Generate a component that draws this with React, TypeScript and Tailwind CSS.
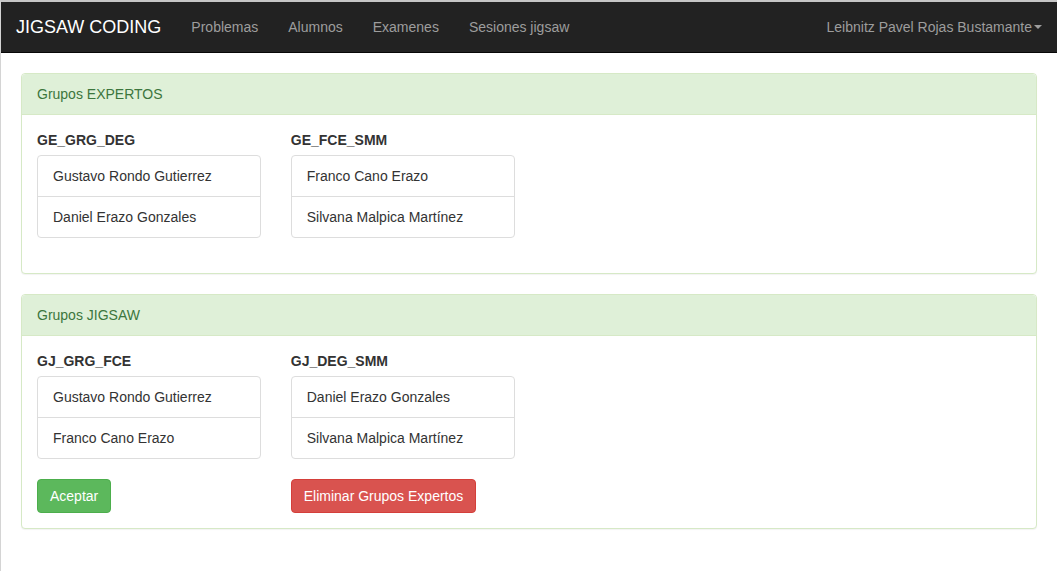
const navLinks = ['Problemas', 'Alumnos', 'Examenes', 'Sesiones jigsaw'];

const expertos = [
  { name: 'GE_GRG_DEG', members: ['Gustavo Rondo Gutierrez', 'Daniel Erazo Gonzales'] },
  { name: 'GE_FCE_SMM', members: ['Franco Cano Erazo', 'Silvana Malpica Martínez'] },
];

const jigsaw = [
  { name: 'GJ_GRG_FCE', members: ['Gustavo Rondo Gutierrez', 'Franco Cano Erazo'] },
  { name: 'GJ_DEG_SMM', members: ['Daniel Erazo Gonzales', 'Silvana Malpica Martínez'] },
];

type Grupo = { name: string; members: string[] };

function GroupList({ grupo }: { grupo: Grupo }) {
  return (
    <div className="w-[223.75px]">
      <div className="mb-[5px] text-[14px] font-bold leading-5 text-[#333]">{grupo.name}</div>
      <ul className="mb-5 rounded border border-[#ddd] bg-white">
        {grupo.members.map((m, i) => (
          <li
            key={m}
            className={`px-[15px] py-[10px] text-[14px] leading-5 text-[#333] ${i > 0 ? 'border-t border-[#ddd]' : ''}`}
          >
            {m}
          </li>
        ))}
      </ul>
    </div>
  );
}

function Panel({ title, grupos, footer }: { title: string; grupos: Grupo[]; footer?: boolean }) {
  return (
    <div className="mb-5 rounded border border-[#d6e9c6] bg-white shadow-[0_1px_1px_rgba(0,0,0,0.05)]">
      <div className="rounded-t border-b border-[#d6e9c6] bg-[#dff0d8] px-[15px] py-[10px] text-[14px] leading-5 text-[#3c763d]">
        {title}
      </div>
      <div className="p-[15px]">
        <div className="flex gap-[30px]">
          {grupos.map((g) => (
            <GroupList key={g.name} grupo={g} />
          ))}
        </div>
        {footer && (
          <div className="flex gap-[30px]">
            <div className="w-[223.75px]">
              <button className="rounded border border-[#4cae4c] bg-[#5cb85c] px-3 py-[6px] text-[14px] leading-5 text-white">
                Aceptar
              </button>
            </div>
            <div className="w-[223.75px]">
              <button className="whitespace-nowrap rounded border border-[#d43f3a] bg-[#d9534f] px-3 py-[6px] text-[14px] leading-5 text-white">
                Eliminar Grupos Expertos
              </button>
            </div>
          </div>
        )}
      </div>
    </div>
  );
}

export default function App() {
  return (
    <div className="min-h-screen border-t-2 border-l border-t-[#c6c6c6] border-l-[#d4d4d4] bg-white font-['Liberation_Sans',Arial,sans-serif]">
      <nav className="flex h-[51px] items-start justify-between border-b border-[#080808] bg-[#222]">
        <div className="flex">
          <span className="px-[15px] py-[15px] text-[18px] leading-5 text-white">JIGSAW CODING</span>
          {navLinks.map((l) => (
            <a key={l} className="px-[15px] py-[15px] text-[14px] leading-5 text-[#9d9d9d]">
              {l}
            </a>
          ))}
        </div>
        <a className="flex items-center px-[15px] py-[15px] text-[14px] leading-5 text-[#9d9d9d]">
          Leibnitz Pavel Rojas Bustamante
          <span className="ml-[2px] h-0 w-0 border-x-4 border-t-4 border-x-transparent border-t-[#9d9d9d]" />
        </a>
      </nav>
      <div className="px-5 pt-5">
        <Panel title="Grupos EXPERTOS" grupos={expertos} />
        <Panel title="Grupos JIGSAW" grupos={jigsaw} footer />
      </div>
    </div>
  );
}
